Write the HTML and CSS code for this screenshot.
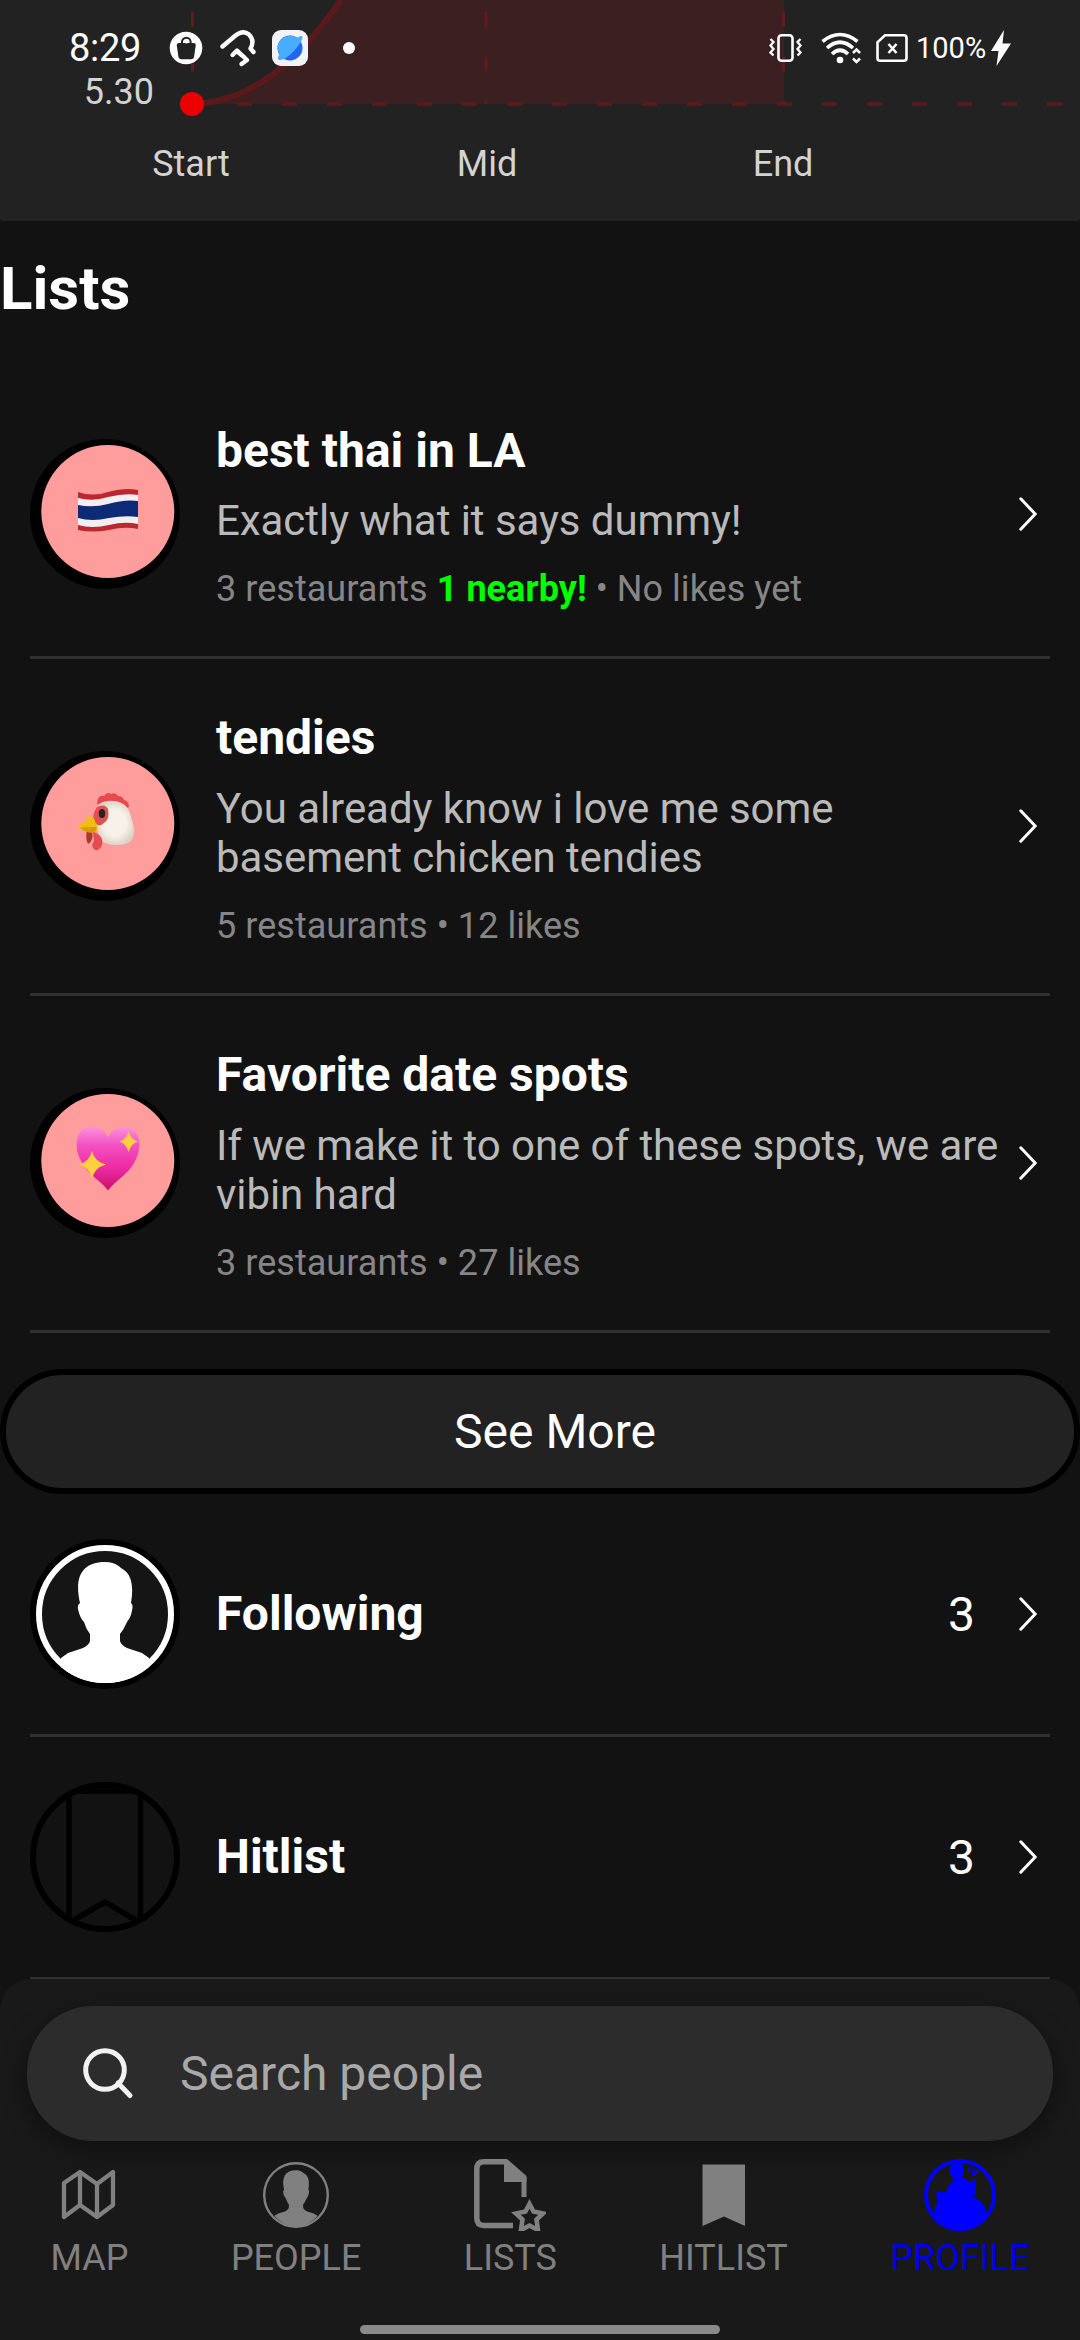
FILE: index.html
```html
<!DOCTYPE html>
<html lang="en">
<head>
<meta charset="utf-8">
<title>Profile</title>
<link rel="stylesheet" href="styles.css">
</head>
<body>
<div class="screen">
  <header class="status">
    <span class="time">8:29</span>
    <svg class="status-left" width="190" height="40" viewBox="166 28 190 40">
      <circle cx="186" cy="48" r="16.300" fill="#fff"/>
      <path d="M179 43h14.500q2.500 0 2.200 2.500l-1.600 11q-.4 2.700-3 2.700h-9.700q-2.600 0-3-2.700l-1.600-11q-.3-2.500 2.200-2.500z" fill="#222"/>
      <path d="M182 43.500v-1.500a4.300 4.300 0 0 1 8.600 0v1.500" fill="none" stroke="#222" stroke-width="2"/>
      <circle cx="186.300" cy="41.500" r="2" fill="#fff"/>
      <g fill="none" stroke="#fff" stroke-width="4.400" stroke-linecap="round" stroke-linejoin="round">
        <path d="M222.500 46.500L235.500 35.500Q243 29.500 249 34.500Q255 40.500 250.500 48.500L253.500 52"/>
        <path d="M232.500 55L237 50.500L247 60L241.500 64M239 53L244 57"/>
      </g>
      <rect x="272" y="30" width="36" height="36" rx="9" fill="#f1f3f6"/>
      <circle cx="290" cy="48" r="12.500" fill="#2166f0"/>
      <path d="M277.500 49A12.500 12.500 0 0 1 297 38Q302 34.500 302.500 37Q302 42 294 51Q284 61 279 60Q276.500 58 279.800 54.500Z" fill="#48adff"/>
      <circle cx="349" cy="48" r="6" fill="#fff"/>
    </svg>
    <svg class="status-right" width="142" height="40" viewBox="768 28 142 40">
      <g fill="none" stroke="#fff" stroke-width="2.600">
        <rect x="777.500" y="35.300" width="14" height="25.500" rx="3"/>
        <path d="M769.500 39l3 3-3 3.500 3 3.500-3 3.500 3 3M799.500 39l-3 3 3 3.500-3 3.500 3 3.500-3 3" stroke-width="2.300"/>
        <path d="M821.500 41.500Q839 27.500 856.500 41.500M826 48Q839 36.500 852 48M831 54Q839 46.500 847 54" stroke-width="3.600"/>
        <path d="M852 53l3.500-3.500 3.500 3.500M852 58.500l3.500 3.500 3.500-3.500" stroke-width="2.500"/>
        <path d="M884 35.300h19q2.500 0 2.500 2.500v20.400q0 2.500-2.500 2.500h-24q-2.500 0-2.500-2.500v-16z"/>
        <path d="M887.500 44l8 9M895.500 44l-8 9"/>
      </g>
      <circle cx="839" cy="60" r="3.300" fill="#fff"/>
    </svg>
    <span class="battery">100%</span>
    <svg class="bolt" width="20" height="36" viewBox="0 0 20 36"><path d="M13 0L0 21H7.500L5.500 36L20 13.500H11.500Z" fill="#fff"/></svg>
  </header>

  <section class="chart">
    <svg width="1080" height="221" viewBox="0 0 1080 221">
      <path d="M192 104C255 102 300 58 341 0H784V104Z" fill="#3b1f21"/>
      <path d="M192 104C255 102 300 58 341 0" fill="none" stroke="#5a1a1b" stroke-width="6"/>
      <path d="M192 104H1062" stroke="#5a1a1c" stroke-width="3.400" stroke-dasharray="15 30"/>
      <path d="M192.500 11.500V104M486 11.500V104M783.500 11.500V104" stroke="#641a1c" stroke-width="3" stroke-dasharray="15 30"/>
      <circle cx="192" cy="104" r="12" fill="#ea0000"/>
      <g class="axis">
        <text x="154" y="104" text-anchor="end">5.30</text>
        <text x="191" y="176" text-anchor="middle">Start</text>
        <text x="487" y="176" text-anchor="middle">Mid</text>
        <text x="783" y="176" text-anchor="middle">End</text>
      </g>
    </svg>
  </section>

  <main>
    <h1>Lists</h1>
    <article class="row list">
      <svg class="avatar" viewBox="0 0 150 150">
        <circle cx="75" cy="75" r="75"/>
        <circle cx="77.800" cy="72.500" r="66.500" fill="#ff9c9c"/>
        <path d="M48 53Q63 58 78 53Q95 48 108 51V90Q95 87 79 91Q62 94 48 91Z" fill="#bd2730"/>
        <path d="M48 59Q63 63 78 58Q95 54 108 56V85Q95 82 79 86Q62 90 48 86Z" fill="#f1eff2"/>
        <path d="M48 66Q63 69 78 65Q95 60 108 62V78Q95 76 79 79Q62 83 48 79Z" fill="#0c2a76"/>
      </svg>
      <div class="text">
        <h2>best thai in LA</h2>
        <p class="desc">Exactly what it says dummy!</p>
        <p class="meta">3 restaurants <b>1 nearby!</b> • No likes yet</p>
      </div>
      <svg class="chev" viewBox="0 0 18 34"><path d="M1.800 1.800L16.200 17L1.800 32.200"/></svg>
    </article>
    <article class="row list">
      <svg class="avatar" viewBox="0 0 150 150">
        <defs><radialGradient id="hen" cx=".5" cy=".5" r=".6"><stop offset=".5" stop-color="#f6f1e9"/><stop offset="1" stop-color="#d5c8b8"/></radialGradient></defs>
        <circle cx="75" cy="75" r="75"/>
        <circle cx="77.800" cy="72.500" r="66.500" fill="#ff9c9c"/>
        <path d="M67 52Q68 43 74 45Q77 40 81 43Q86 41 88 45Q93 45 94 49Q99 50 99 56L90 60L70 56Z" fill="#e8494c"/>
        <path d="M68 54Q74 49 84 50Q98 51 101 66Q106 80 103 87Q101 94 88 94Q74 94 70 88Q67 80 66 70Z" fill="url(#hen)"/>
        <path d="M67 56Q75 52 78 58Q80 68 74 72Q70 76 66 73Q60 66 67 56Z" fill="#dc5252"/>
        <ellipse cx="72" cy="62.500" rx="3.200" ry="4.500" fill="#262022"/>
        <path d="M57 79L62 80Q64 90 58 93Q55 88 57 79Z" fill="#a83b2c"/>
        <path d="M63 81Q74 84 72 94Q70 100 65 99Q60 96 64 90Z" fill="#e34d4d"/>
        <path d="M48 75Q55 71 59 65Q65 66 65 71Q69 74 67 80Q61 84 48 77Z" fill="#f0bd12"/>
        <path d="M50 76.500Q59 76 66 76Q67 80 64 81Q57 83 50 76.500Z" fill="#d59b09"/>
      </svg>
      <div class="text">
        <h2>tendies</h2>
        <p class="desc">You already know i love me some basement chicken tendies</p>
        <p class="meta">5 restaurants • 12 likes</p>
      </div>
      <svg class="chev" viewBox="0 0 18 34"><path d="M1.800 1.800L16.200 17L1.800 32.200"/></svg>
    </article>
    <article class="row list">
      <svg class="avatar" viewBox="0 0 150 150">
        <defs><linearGradient id="heart" x1="0" y1="0" x2="0" y2="1"><stop offset="0" stop-color="#fa91dd"/><stop offset=".3" stop-color="#f44fc0"/><stop offset=".65" stop-color="#ed2aa3"/><stop offset="1" stop-color="#c80f67"/></linearGradient></defs>
        <circle cx="75" cy="75" r="75"/>
        <circle cx="77.800" cy="72.500" r="66.500" fill="#ff9c9c"/>
        <path d="M78 102.500Q74 97 64 89Q46.500 73 46.500 56Q47.500 39 62 39Q73 39 78 49Q83 39 94 39Q108.500 40 109.500 56Q109 74 93 88Q82 97 78 102.500Z" fill="url(#heart)"/>
        <path d="M62 63Q64.500 73.500 76 76.500Q64.500 79.500 62 91Q59.500 79.500 49 76.500Q59.500 73.500 62 63ZM98.500 43.500Q100.500 51.500 108 53.500Q100.500 56 98.500 64Q96.500 56 89.500 53.500Q96.500 51.500 98.500 43.500Z" fill="#ffcf3f"/>
      </svg>
      <div class="text">
        <h2>Favorite date spots</h2>
        <p class="desc">If we make it to one of these spots, we are vibin hard</p>
        <p class="meta">3 restaurants • 27 likes</p>
      </div>
      <svg class="chev" viewBox="0 0 18 34"><path d="M1.800 1.800L16.200 17L1.800 32.200"/></svg>
    </article>
    <button class="more">See More</button>
    <article class="row stat">
      <svg class="avatar" viewBox="0 0 150 150">
        <defs><clipPath id="disc"><circle cx="75" cy="75" r="69"/></clipPath></defs>
        <circle cx="75" cy="75" r="75"/>
        <circle cx="75" cy="75" r="66" fill="#151515" stroke="#fff" stroke-width="6"/>
        <path clip-path="url(#disc)" fill="#fff" d="M75 23C87 23 90 29 94 31C101 36 104 46 101 64Q103.500 66 102 71.500Q101 78 97 83Q94 90 90 95V102Q91 106 97 109L112 114L119 119V150H31V119L38 114L53 109Q59 106 60 102V95Q56 90 54 83Q50 79 48.500 72Q46.500 66 50 64C44 38 52 23 75 23Z"/>
      </svg>
      <div class="text"><h2>Following</h2></div>
      <span class="count">3</span>
      <svg class="chev" viewBox="0 0 18 34"><path d="M1.800 1.800L16.200 17L1.800 32.200"/></svg>
    </article>
    <article class="row stat">
      <svg class="avatar" viewBox="0 0 150 150">
        <g fill="none" stroke="#000"><circle cx="75" cy="75" r="72" stroke-width="6"/>
        <path clip-path="url(#disc)" d="M39 9H110.500V141L75 120L39 141Z" stroke-width="5.500"/></g>
      </svg>
      <div class="text"><h2>Hitlist</h2></div>
      <span class="count">3</span>
      <svg class="chev" viewBox="0 0 18 34"><path d="M1.800 1.800L16.200 17L1.800 32.200"/></svg>
    </article>
  </main>

  <footer class="dock">
    <div class="search">
      <svg width="52" height="54" viewBox="0 0 52 54"><circle cx="23" cy="23" r="19.300" fill="none" stroke="#f2f2f2" stroke-width="5"/><path d="M36 36L48 48.500" stroke="#f2f2f2" stroke-width="5" stroke-linecap="round"/></svg>
      <span>Search people</span>
    </div>
    <nav>
      <a><svg viewBox="0 0 72 72"><path d="M11 24L27 13L44 25L60 13V46L44 58L27 46L11 58ZM27 13V46M44 25V58" fill="none" stroke="#808080" stroke-width="4.300" stroke-linejoin="round"/></svg><span>MAP</span></a>
      <a><svg viewBox="0 0 72 72"><circle cx="36" cy="36" r="31.800" fill="none" stroke="#808080" stroke-width="2.400"/><path fill="#808080" transform="translate(.3 .3) scale(.476)" d="M75 23C87 23 90 29 94 31C101 36 104 46 101 64Q103.500 66 102 71.500Q101 78 97 83Q94 90 90 95V102Q91 106 97 109L112 114L121 119Q98 142 75 142Q52 142 29 119L38 114L53 109Q59 106 60 102V95Q56 90 54 83Q50 79 48.500 72Q46.500 66 50 64C44 38 52 23 75 23Z"/></svg><span>PEOPLE</span></a>
      <a><svg viewBox="0 0 72 72"><g fill="none" stroke="#808080"><path d="M33 2.800H10Q2.800 2.800 2.800 10V59Q2.800 66.500 10 66.500H39" stroke-width="5.500"/><path d="M50 18V38" stroke-width="5"/><path d="M55.500 45L59.500 52.500L69 54.500L62.500 60.500L64 71L55.500 66.500L47 71L48.500 60.500L42 54.500L51.500 52.500Z" stroke-width="4.600"/></g><path d="M30 0H33L52.500 17V23H30Z" fill="#808080"/></svg><span>LISTS</span></a>
      <a><svg viewBox="0 0 72 72"><path d="M14.500 5.500H57V67L36 57.500L14.500 67Z" fill="#808080"/></svg><span>HITLIST</span></a>
      <a class="active"><svg viewBox="0 0 72 72"><circle cx="36" cy="36" r="34" fill="none" stroke="#00f" stroke-width="4"/><path fill="#00f" d="M26 12Q26 3 33 2.500Q40 4 40 12Q39.500 17 37 19Q43 19 45 23L52 20.500Q51 24 52 27V36L48 38Q60 41 62 52V60Q52 71 36 71Q19 71 12 59Q8 51 13.500 44Q12 38 12.500 32.500L22 33.500Q24 25 31 20Q26 18 26 12Z"/><path d="M47 8L43.500 12.500M51 9.500L48 13.500M54.500 11.500L48 16L52 15.500" stroke="#00f" stroke-width="1.600" fill="none"/></svg><span>PROFILE</span></a>
    </nav>
    <div class="home"></div>
  </footer>
</div>
</body>
</html>
```
FILE: styles.css
```css
* { box-sizing: border-box; }
body, h1, h2, p { margin: 0; }
body { background: #121212; font-family: Roboto, sans-serif; color: #fff; }
svg { display: block; flex: none; }
.screen { position: relative; width: 1080px; height: 2340px; overflow: hidden; background: #121212; }

/* system bar drawn over the scrolled content */
.status { position: absolute; z-index: 2; top: 28px; left: 0; width: 1080px; height: 40px; display: flex; align-items: center; padding: 0 69px; }
.time { width: 97px; font-size: 38px; line-height: 40px; letter-spacing: -.3px; }
.status-right { margin-left: auto; }
.battery { margin-left: 5px; width: 73px; font-size: 29px; white-space: nowrap; }
.bolt { margin-left: 2px; }

.chart { height: 221px; background: #222; overflow: hidden; border-radius: 0 0 3px 3px; }
.axis { font-size: 36px; fill: #d3d3d3; }

h1 { margin-top: 33px; height: 117.500px; font-size: 60px; line-height: 70px; font-weight: 700; }
.row { margin: 0 30px; padding-right: 13px; border-bottom: 3px solid #303030; display: flex; align-items: center; }
.avatar { width: 150px; height: 150px; }
.text { flex: 1; padding-left: 36px; }
h2 { font-size: 48px; line-height: 56px; font-weight: 700; }
.list .text { padding-top: 51px; padding-bottom: 46px; }
.desc { margin-top: 17.500px; font-size: 42px; line-height: 49.200px; letter-spacing: -.06px; color: #bababa; }
.meta { margin-top: 23px; font-size: 36px; line-height: 42px; letter-spacing: .04px; color: #868686; }
.meta b { color: #0f0; }
.chev { width: 18px; height: 34px; fill: none; stroke: #fff; stroke-width: 3; stroke-linecap: round; }
.more { display: block; margin-top: 36px; width: 1080px; height: 125px; padding: 0 0 0 30px; border: 6px solid #000; border-radius: 63px; background: #222; color: #fff; font: 400 48px Roboto, sans-serif; }
.stat { height: 243px; }
.count { font-size: 48px; margin-right: 44px; }

/* bottom search and tabs overlay the list */
.dock { position: absolute; z-index: 1; left: 0; bottom: 0; width: 1080px; height: 361px; padding-top: 27px; background: #191919; border-radius: 31px 31px 0 0; display: flex; flex-direction: column; align-items: center; }
.search { width: 1026px; height: 135px; border-radius: 66px; background: #2c2c2c; box-shadow: 0 8px 26px rgba(0, 0, 0, .4); display: flex; align-items: center; padding-left: 55px; color: #a8a8a8; font-size: 48px; }
.search span { margin-left: 46px; }
nav { width: 979px; margin-top: 18px; display: flex; justify-content: space-between; }
nav a { display: flex; flex-direction: column; align-items: center; color: #808080; font-size: 36px; line-height: 42px; }
nav svg { width: 72px; height: 72px; margin-bottom: 6px; }
nav .active { color: #0000e6; }
.home { width: 360px; height: 9px; margin-top: auto; margin-bottom: 6px; border-radius: 5px; background: #8a8a8a; }
```
